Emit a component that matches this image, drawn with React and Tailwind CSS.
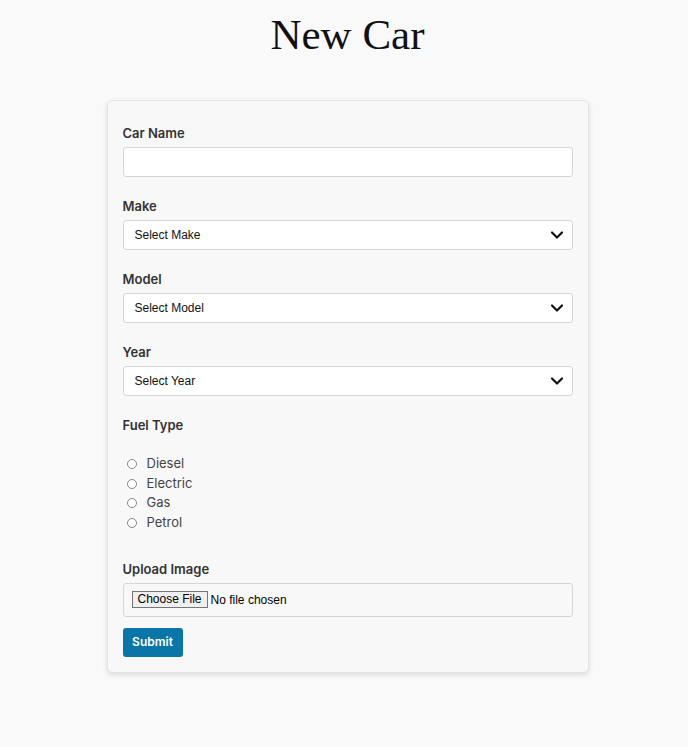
export default function App() {
  const fuels = ["Diesel", "Electric", "Gas", "Petrol"];
  const selects = [
    ["Make", "Select Make"],
    ["Model", "Select Model"],
    ["Year", "Select Year"],
  ];

  return (
    <div className="min-h-screen bg-[#f9f9f9] pt-[9px] pb-16 pl-[7px] font-['Inter',sans-serif] text-[#333]">
      <h1 className="text-center font-['Liberation_Serif',serif] text-[43px] leading-[52px] text-[#111]">
        New Car
      </h1>

      <div className="mx-auto mt-[39px] w-[482px] rounded-md border border-[#e3e3e3] bg-[#f8f8f8] px-[15px] pt-[22px] pb-[15px] shadow-[0_2px_5px_rgba(0,0,0,0.12)]">
        <label className="block text-[13px] font-semibold leading-5 text-[#333]">Car Name</label>
        <input
          type="text"
          className="mt-[4px] block h-[30px] w-full rounded-[3px] border border-[#d6d6d6] bg-white px-3"
        />

        {selects.map(([label, placeholder]) => (
          <div key={label} className="mt-[19px]">
            <label className="block text-[13px] font-semibold leading-5 text-[#333]">{label}</label>
            <div className="mt-[4px] flex h-[30px] items-center justify-between rounded-[3px] border border-[#d6d6d6] bg-white pl-[11px] pr-[8px]">
              <span className="font-['Liberation_Sans',sans-serif] text-[12px] text-[#111]">{placeholder}</span>
              <svg width="14" height="14" viewBox="0 0 14 14" fill="none">
                <path d="M2 4.5 L7 9.5 L12 4.5" stroke="#111" strokeWidth="2.2" strokeLinecap="round" strokeLinejoin="round" />
              </svg>
            </div>
          </div>
        ))}

        <div className="mt-[19px]">
          <label className="block text-[13px] font-semibold leading-5 text-[#333]">Fuel Type</label>
          <div className="mt-[19px] flex flex-col">
            {fuels.map((f) => (
              <div key={f} className="flex h-[19.7px] items-center">
                <span className="ml-[4px] h-[10px] w-[10px] rounded-full border border-[#888] bg-white" />
                <span className="ml-[10px] text-[13px] text-[#444]">{f}</span>
              </div>
            ))}
          </div>
        </div>

        <div className="mt-[26px]">
          <label className="block text-[13px] font-semibold leading-5 text-[#333]">Upload Image</label>
          <div className="mt-[4px] flex h-[34px] items-center rounded-[3px] border border-[#d6d6d6] bg-[#f8f8f8] pl-[8px]">
            <span className="border border-[#767676] bg-[#efefef] px-[5px] font-['Liberation_Sans',sans-serif] text-[12px] leading-[15px] text-black">
              Choose File
            </span>
            <span className="ml-[3px] font-['Liberation_Sans',sans-serif] text-[12px] text-black">No file chosen</span>
          </div>
        </div>

        <button className="mt-[11px] h-[29px] w-[60px] rounded-[3px] bg-[#0a76a8] text-[12px] font-semibold text-white">
          Submit
        </button>
      </div>
    </div>
  );
}
